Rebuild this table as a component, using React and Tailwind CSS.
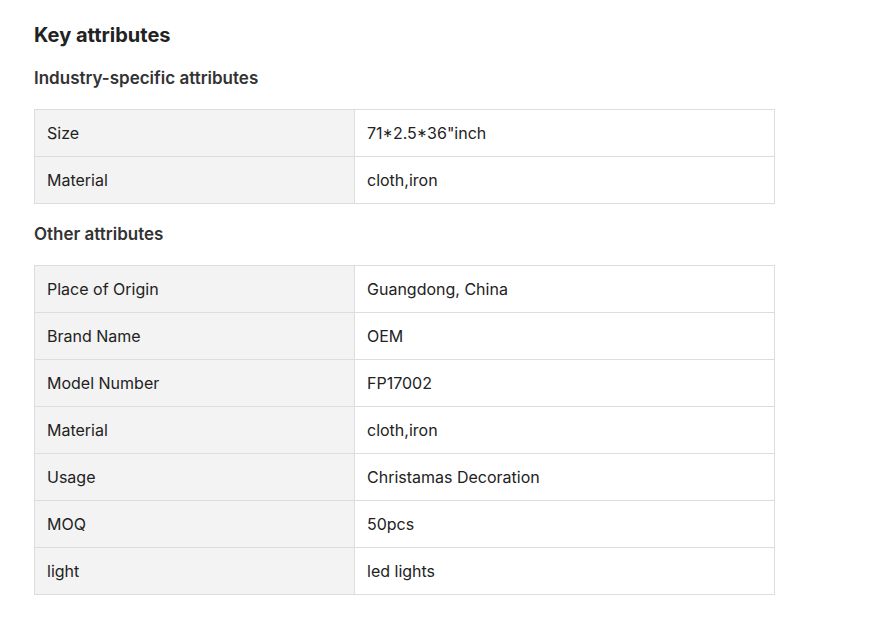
import React from "react";

const industry = [
	["Size", "71*2.5*36\"inch"],
	["Material", "cloth,iron"],
];

const other = [
	["Place of Origin", "Guangdong, China"],
	["Brand Name", "OEM"],
	["Model Number", "FP17002"],
	["Material", "cloth,iron"],
	["Usage", "Christamas Decoration"],
	["MOQ", "50pcs"],
	["light", "led lights"],
];

function AttrTable({ rows }) {
	return (
		<div className="w-[741px] border-t border-l border-[#dddddd]">
			{rows.map(([k, v], i) => (
				<div key={i} className="flex">
					<div className="w-[320px] h-[47px] flex items-center pl-3 bg-[#f3f3f3] border-r border-b border-[#dddddd]">
						{k}
					</div>
					<div className="w-[420px] h-[47px] flex items-center pl-3 border-r border-b border-[#dddddd]">
						{v}
					</div>
				</div>
			))}
		</div>
	);
}

export default function App() {
	return (
		<div
			className="min-h-screen bg-white text-[#222222] pl-[34px] pt-[21px]"
			style={{ fontFamily: "Inter, 'Noto Sans', sans-serif" }}
		>
			<h2 className="text-[20px] leading-[28px] font-bold">Key attributes</h2>
			<h3 className="mt-[17px] text-[17px] leading-[24px] font-semibold text-[#333333]">
				Industry-specific attributes
			</h3>
			<div className="mt-[19px] text-[16px]">
				<AttrTable rows={industry} />
			</div>
			<h3 className="mt-[18px] text-[17px] leading-[24px] font-semibold text-[#333333]">
				Other attributes
			</h3>
			<div className="mt-[19px] text-[16px]">
				<AttrTable rows={other} />
			</div>
		</div>
	);
}
